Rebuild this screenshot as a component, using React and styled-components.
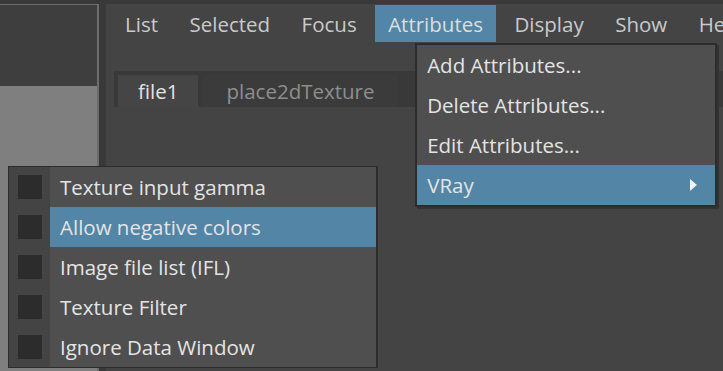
import React from 'react';
import styled, { createGlobalStyle } from 'styled-components';

const GlobalStyle = createGlobalStyle`
  html, body {
    margin: 0;
    padding: 0;
    background: #393939;
    overflow: hidden;
  }
  * { box-sizing: border-box; }
`;

const Screen = styled.div`
  position: relative;
  width: 723px;
  height: 371px;
  display: flex;
  gap: 7px;
  padding-top: 4px;
  background: #393939;
  font-family: 'Open Sans', 'Noto Sans', sans-serif;
  font-size: 20.5px;
  color: #dcdcdc;
`;

const SidePane = styled.div`
  flex: 0 0 99px;
  display: flex;
  flex-direction: column;
  border-top: 1px solid #6c6c6c;
  border-right: 2px solid #6c6c6c;
`;

const SideTop = styled.div`
  height: 81px;
  background: #3e3e3e;
`;

const SideView = styled.div`
  flex: 1;
  background: #7f7f7f;
`;

const MainPanel = styled.div`
  flex: 1;
  min-width: 0;
  display: flex;
  flex-direction: column;
  background: #444444;
`;

const MenuBar = styled.div`
  display: flex;
  gap: 5.5px;
  height: 38px;
  padding: 1px 0 0 6px;
`;

const MenuTitle = styled.div`
  position: relative;
  flex-shrink: 0;
  display: flex;
  align-items: center;
  padding: 0 13px;
  white-space: nowrap;
  color: ${(p) => (p.$open ? '#dedede' : '#cacaca')};
  background: ${(p) => (p.$open ? '#5285a6' : 'transparent')};
`;

const TabBar = styled.div`
  display: flex;
  gap: 5px;
  height: 36px;
  margin: 29px 0 0 8px;
  padding: 4px 0 0 4px;
  background: #393939;
`;

const Tab = styled.div`
  display: flex;
  align-items: center;
  flex-shrink: 0;
  padding: 0 ${(p) => (p.$active ? 20 : 23)}px;
  background: ${(p) => (p.$active ? '#454545' : '#3b3b3b')};
  color: ${(p) => (p.$active ? '#e2e2e2' : '#8e8e8e')};
  white-space: nowrap;
`;

const Dropdown = styled.div`
  position: absolute;
  top: 38px;
  left: 40px;
  width: 302px;
  background: #4f4f4f;
  border: 2px solid #2c2c2c;
  box-shadow: 2px 2px 0 #333;
  z-index: 2;
`;

const MenuRow = styled.div`
  display: flex;
  align-items: center;
  justify-content: space-between;
  height: 40px;
  padding: 0 18px 0 10px;
  color: #e4e4e4;
  white-space: nowrap;
  background: ${(p) => (p.$hover ? '#5285a6' : 'transparent')};
`;

const Arrow = styled.span`
  width: 0;
  height: 0;
  border-top: 6px solid transparent;
  border-bottom: 6px solid transparent;
  border-left: 7px solid #f4f4f4;
`;

const SubMenu = styled.div`
  position: absolute;
  left: 8px;
  top: 166px;
  width: 370px;
  display: flex;
  background: #4f4f4f;
  border: 1px solid #2c2c2c;
  border-right-width: 2px;
  z-index: 3;
`;

const CheckColumn = styled.div`
  width: 41px;
  display: flex;
  flex-direction: column;
  background: #444444;
`;

const CheckCell = styled.div`
  height: 40px;
  display: flex;
  align-items: center;
  justify-content: center;
`;

const CheckBox = styled.span`
  width: 24px;
  height: 24px;
  background: #2c2c2c;
`;

const SubItems = styled.div`
  flex: 1;
  display: flex;
  flex-direction: column;
`;

const menuTitles = ['List', 'Selected', 'Focus', 'Attributes', 'Display', 'Show', 'Help'];
const attrItems = ['Add Attributes...', 'Delete Attributes...', 'Edit Attributes...'];
const vrayItems = [
  'Texture input gamma',
  'Allow negative colors',
  'Image file list (IFL)',
  'Texture Filter',
  'Ignore Data Window',
];

export default function App() {
  return (
    <>
      <GlobalStyle />
      <Screen>
        <SidePane>
          <SideTop />
          <SideView />
        </SidePane>
        <MainPanel>
          <MenuBar>
            {menuTitles.map((t) => (
              <MenuTitle key={t} $open={t === 'Attributes'}>
                {t}
                {t === 'Attributes' && (
                  <Dropdown>
                    {attrItems.map((a) => (
                      <MenuRow key={a}>{a}</MenuRow>
                    ))}
                    <MenuRow $hover>
                      VRay
                      <Arrow />
                    </MenuRow>
                  </Dropdown>
                )}
              </MenuTitle>
            ))}
          </MenuBar>
          <TabBar>
            <Tab $active>file1</Tab>
            <Tab>place2dTexture</Tab>
          </TabBar>
        </MainPanel>
        <SubMenu>
          <CheckColumn>
            {vrayItems.map((v) => (
              <CheckCell key={v}>
                <CheckBox />
              </CheckCell>
            ))}
          </CheckColumn>
          <SubItems>
            {vrayItems.map((v, i) => (
              <MenuRow key={v} $hover={i === 1}>
                {v}
              </MenuRow>
            ))}
          </SubItems>
        </SubMenu>
      </Screen>
    </>
  );
}
